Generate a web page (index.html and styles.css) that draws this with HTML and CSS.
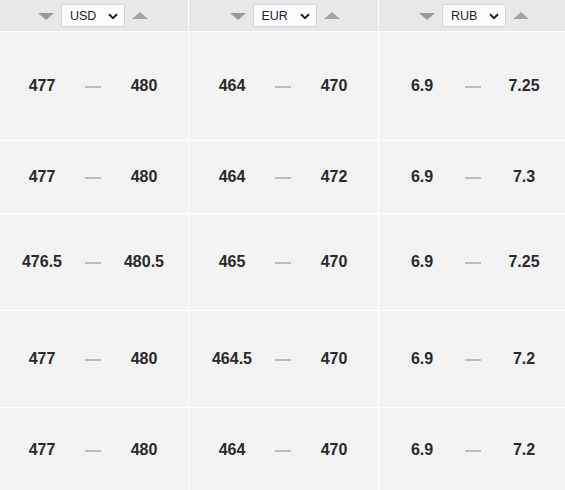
FILE: index.html
```html
<!DOCTYPE html>
<html>
<head>
<meta charset="utf-8">
<link rel="stylesheet" href="styles.css">
</head>
<body>
<div class="rates">
  <div class="head">
    <div class="hcell">
      <span class="tri down"></span>
      <div class="sel"><span>USD</span><svg width="10" height="7" viewBox="0 0 10 7"><path d="M1 1.2 L5 5.2 L9 1.2" fill="none" stroke="#222" stroke-width="2"/></svg></div>
      <span class="tri up"></span>
    </div>
    <div class="hcell">
      <span class="tri down"></span>
      <div class="sel"><span>EUR</span><svg width="10" height="7" viewBox="0 0 10 7"><path d="M1 1.2 L5 5.2 L9 1.2" fill="none" stroke="#222" stroke-width="2"/></svg></div>
      <span class="tri up"></span>
    </div>
    <div class="hcell">
      <span class="tri down"></span>
      <div class="sel"><span>RUB</span><svg width="10" height="7" viewBox="0 0 10 7"><path d="M1 1.2 L5 5.2 L9 1.2" fill="none" stroke="#222" stroke-width="2"/></svg></div>
      <span class="tri up"></span>
    </div>
  </div>

  <div class="row r1">
    <div class="cell"><b>477</b><i></i><b>480</b></div>
    <div class="cell"><b>464</b><i></i><b>470</b></div>
    <div class="cell"><b>6.9</b><i></i><b>7.25</b></div>
  </div>
  <div class="row r2">
    <div class="cell"><b>477</b><i></i><b>480</b></div>
    <div class="cell"><b>464</b><i></i><b>472</b></div>
    <div class="cell"><b>6.9</b><i></i><b>7.3</b></div>
  </div>
  <div class="row r3">
    <div class="cell"><b>476.5</b><i></i><b>480.5</b></div>
    <div class="cell"><b>465</b><i></i><b>470</b></div>
    <div class="cell"><b>6.9</b><i></i><b>7.25</b></div>
  </div>
  <div class="row r4">
    <div class="cell"><b>477</b><i></i><b>480</b></div>
    <div class="cell"><b>464.5</b><i></i><b>470</b></div>
    <div class="cell"><b>6.9</b><i></i><b>7.2</b></div>
  </div>
  <div class="row r5">
    <div class="cell"><b>477</b><i></i><b>480</b></div>
    <div class="cell"><b>464</b><i></i><b>470</b></div>
    <div class="cell"><b>6.9</b><i></i><b>7.2</b></div>
  </div>
</div>
</body>
</html>
```
FILE: styles.css
```css
html, body {
  margin: 0;
  padding: 0;
  background: #ffffff;
  overflow: hidden;
}
body {
  font-family: "Liberation Sans", Arial, sans-serif;
  color: #222;
}
.rates {
  display: grid;
  grid-template-columns: 1fr;
  row-gap: 1px;
  background: #ffffff;
  width: 565px;
}
.head, .row {
  display: grid;
  grid-template-columns: 188px 189px 1fr;
  column-gap: 1px;
}
.head { height: 31px; }
.hcell {
  background: #e8e8e8;
  display: flex;
  align-items: center;
  justify-content: center;
  gap: 7px;
  padding-left: 2px;
}
.hcell:first-child { padding-left: 0; padding-right: 2px; }
.tri {
  width: 0;
  height: 0;
  border-left: 8px solid transparent;
  border-right: 8px solid transparent;
}
.tri.down { border-top: 7px solid #9a9a9a; margin-top: 1px; }
.tri.up { border-bottom: 7px solid #a3a3a3; margin-top: -1px; }
.sel {
  height: 21px;
  box-sizing: content-box;
  border: 1px solid #cfd6e2;
  border-radius: 2px;
  background: #fbfcfe;
  display: flex;
  align-items: center;
  justify-content: space-between;
  padding: 0 6px 0 8px;
  width: 48px;
  font-size: 12.5px;
  color: #1f1f1f;
}
.sel svg { display: block; margin-top: 1px; }
.r1 { height: 108px; }
.r2 { height: 72px; }
.r3 { height: 96px; }
.r4 { height: 96px; }
.r5 { height: 84px; }
.cell {
  background: #f3f3f3;
  display: grid;
  grid-template-columns: 86px 16px 86px;
  align-items: center;
  justify-items: center;
  font-size: 16px;
  font-weight: bold;
  color: #2a2a2a;
}
.cell:first-child { margin-left: -1px; }
.cell b { font-weight: bold; }
.cell i {
  display: block;
  width: 16px;
  height: 2px;
  background: #bcbcbc;
  margin-top: 1px;
}
```
